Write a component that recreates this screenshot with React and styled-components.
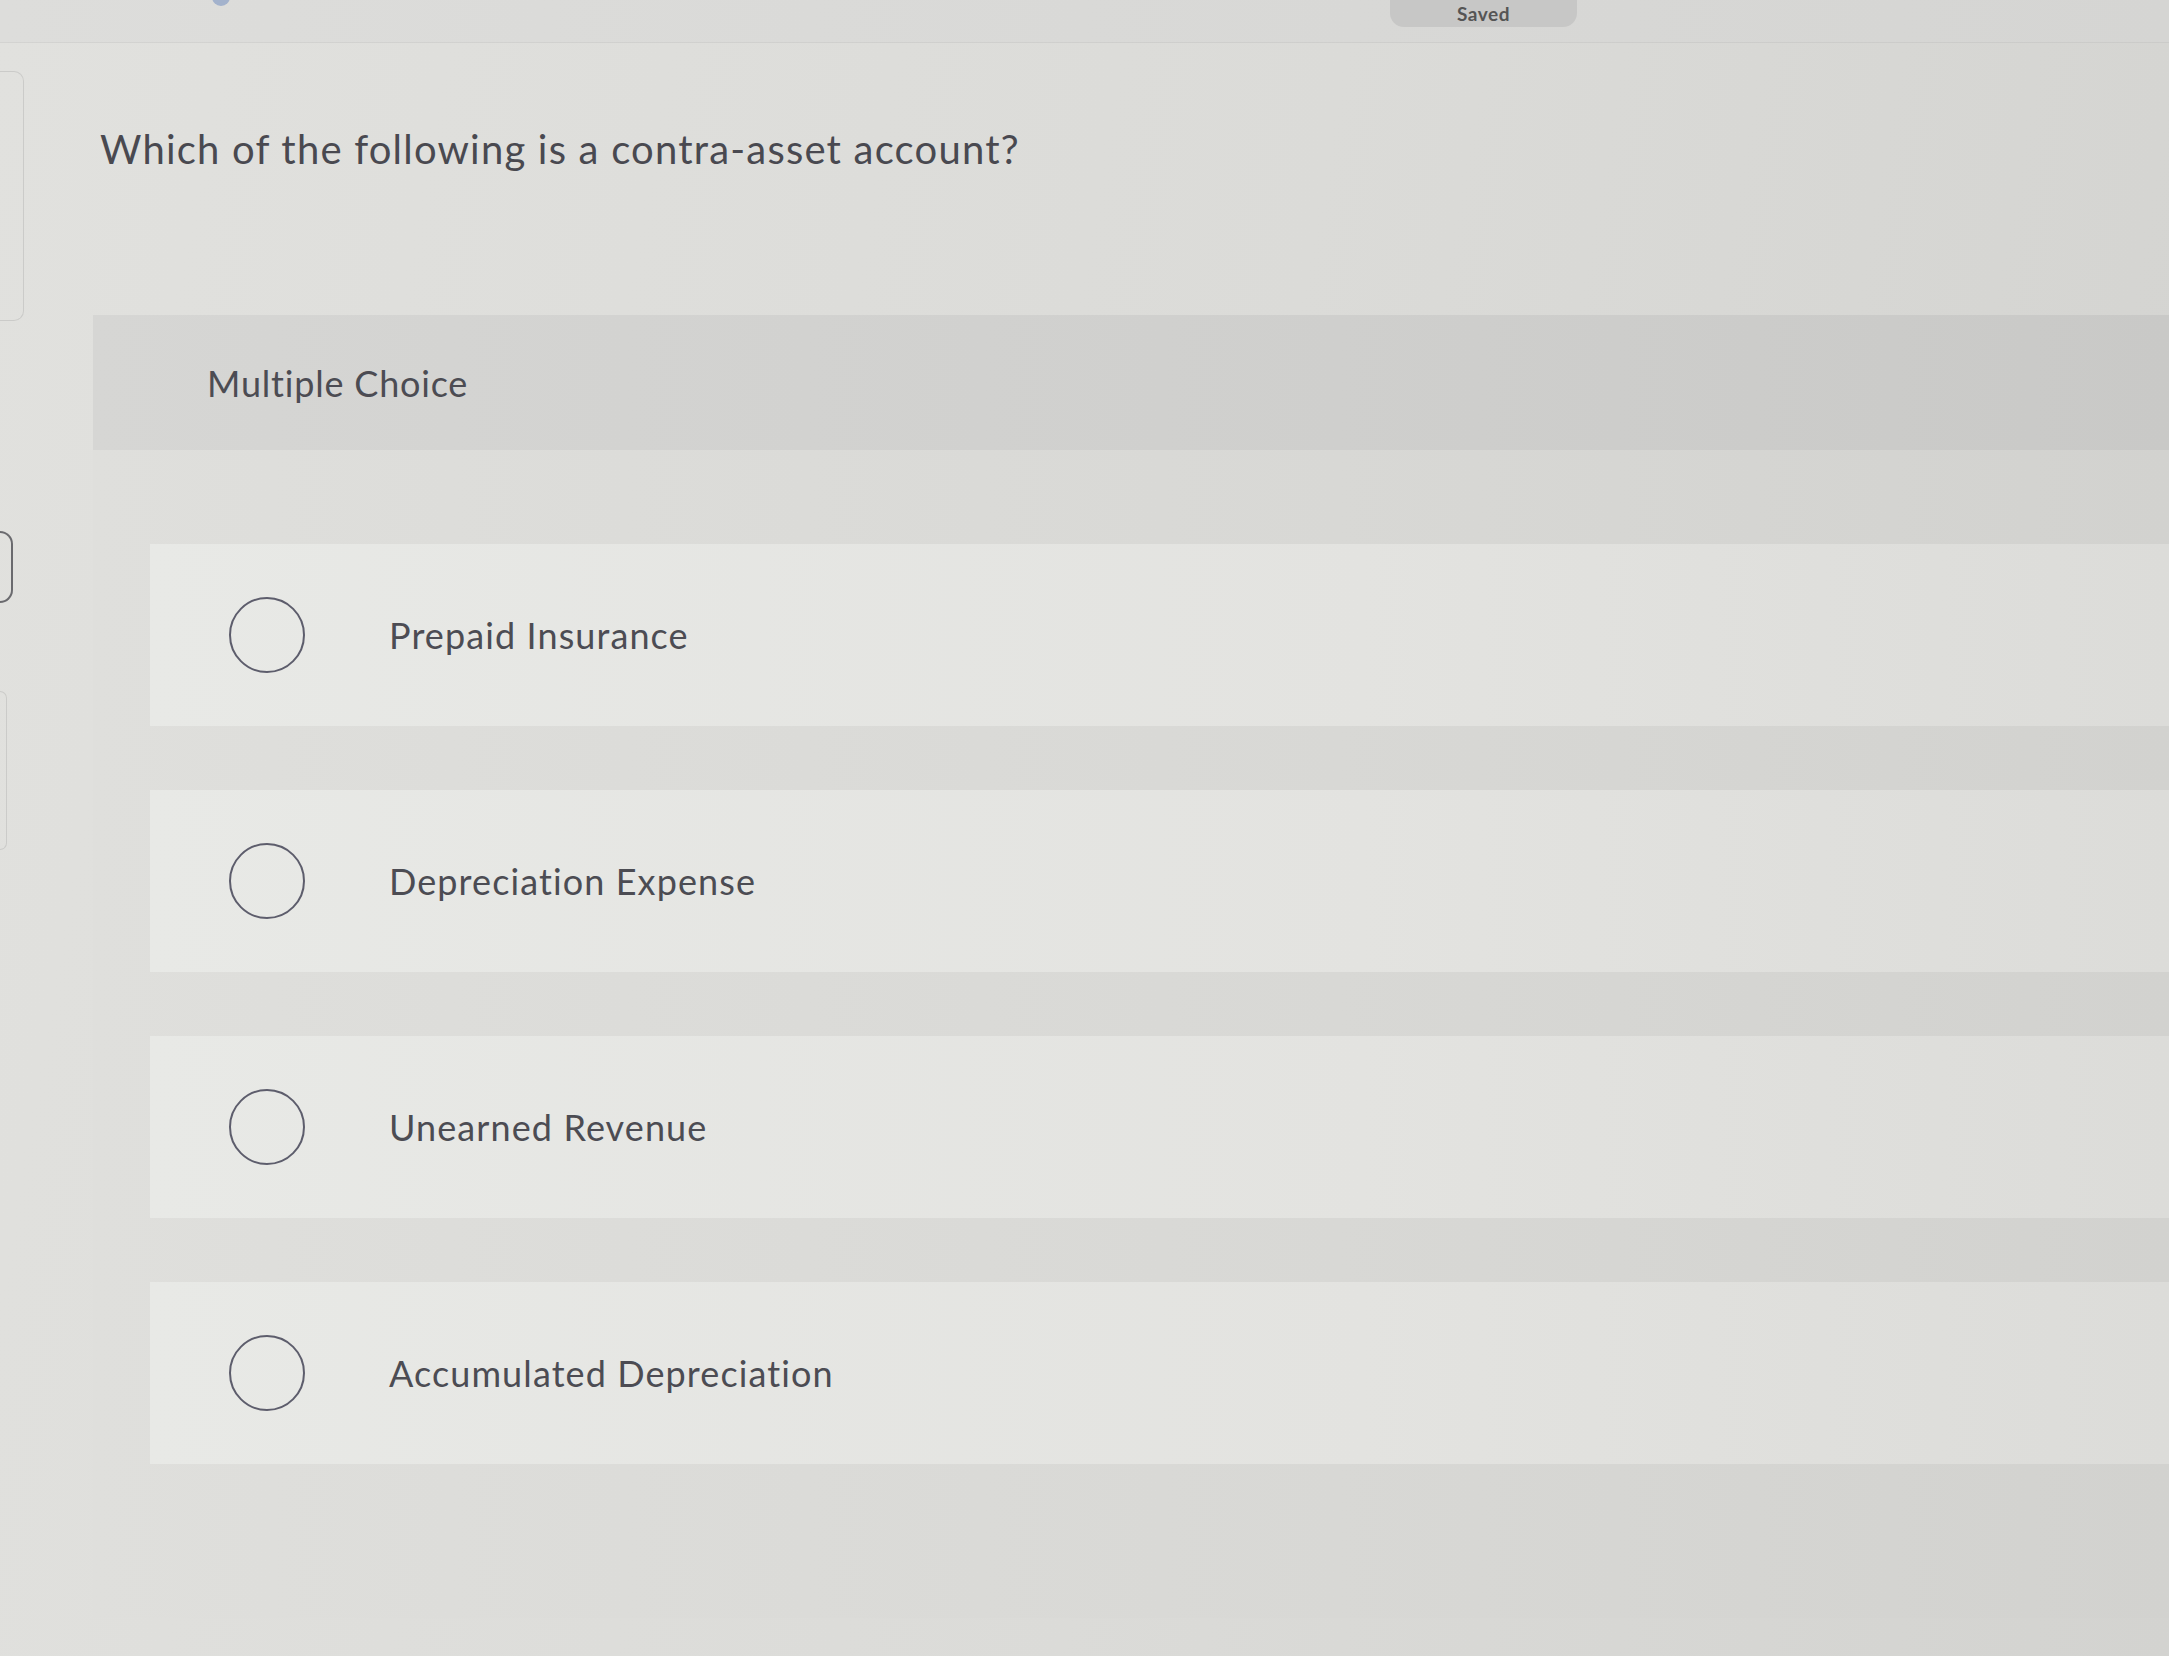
import React from "react";
import styled, { createGlobalStyle } from "styled-components";

const GlobalStyle = createGlobalStyle`
  html, body { margin: 0; padding: 0; }
  body {
    font-family: Lato, "Open Sans", "Liberation Sans", sans-serif;
    background: linear-gradient(100deg, #e1e1de 0%, #dbdbd8 55%, #d3d3d0 100%);
    overflow: hidden;
  }
`;

const Page = styled.div`
  width: 2169px;
  height: 1656px;
  display: flex;
  flex-direction: column;
  overflow: hidden;
`;

const TopBar = styled.div`
  height: 42px;
  flex: none;
  display: flex;
  align-items: flex-start;
  border-bottom: 1px solid rgba(0, 0, 0, 0.045);
  background: linear-gradient(90deg, #dddddb 0%, #d5d5d3 100%);
`;

const BlueDot = styled.div`
  width: 18px;
  height: 18px;
  margin: -12px 0 0 212px;
  border-radius: 50%;
  background: #8aa0c6;
  opacity: 0.7;
`;

const SavedPill = styled.div`
  margin-left: 1160px;
  width: 187px;
  height: 27px;
  border-radius: 0 0 14px 14px;
  background: #c7c7c6;
  display: flex;
  align-items: center;
  justify-content: center;
  color: #555;
  font-size: 19px;
  font-weight: 700;
  line-height: 1;
  letter-spacing: 0.5px;
`;

const Body = styled.div`
  flex: 1;
  display: flex;
`;

const LeftRail = styled.div`
  width: 24px;
  flex: none;
  display: flex;
  flex-direction: column;
  align-items: flex-start;
  padding-top: 28px;
`;

const SideCard = styled.div`
  width: ${(p) => p.$w}px;
  height: ${(p) => p.$h}px;
  margin-top: ${(p) => p.$mt || 0}px;
  border: 1px solid #cbcbc9;
  border-left: none;
  border-radius: 0 10px 10px 0;
`;

const Bracket = styled.div`
  width: 11px;
  height: 68px;
  margin-top: 210px;
  border: 2px solid #6a6a6e;
  border-left: none;
  border-radius: 0 24px 24px 0;
`;

const Main = styled.main`
  flex: 1;
  display: flex;
  flex-direction: column;
  padding-left: 69px;
`;

const Question = styled.h1`
  margin: 82px 0 0 7px;
  font-size: 40px;
  font-weight: 400;
  line-height: 1.2;
  letter-spacing: 1.2px;
  color: #494950;
`;

const Panel = styled.section`
  margin-top: 142px;
  display: flex;
  flex-direction: column;
  background: linear-gradient(90deg, #dfdfdc 0%, #d8d8d5 60%, #d2d2cf 100%);
`;

const PanelHeader = styled.div`
  height: 135px;
  display: flex;
  align-items: center;
  padding-left: 114px;
  background: linear-gradient(90deg, #d6d6d4 0%, #cfcfcd 60%, #c9c9c7 100%);
  font-size: 36px;
  letter-spacing: 0.8px;
  color: #4c4c53;
`;

const OptionList = styled.div`
  display: flex;
  flex-direction: column;
  gap: 64px;
  padding: 94px 0 154px 57px;
`;

const OptionRow = styled.label`
  height: 182px;
  display: flex;
  align-items: center;
  gap: 84px;
  padding-left: 79px;
  background: linear-gradient(90deg, #e8e9e6 0%, #e3e3e0 60%, #dcdcd9 100%);
  cursor: pointer;
`;

const Radio = styled.span`
  width: 72px;
  height: 72px;
  flex: none;
  border: 2.5px solid #5d5d6c;
  border-radius: 50%;
`;

const OptionText = styled.span`
  font-size: 36px;
  letter-spacing: 1.1px;
  color: #4c4c53;
`;

const options = [
  "Prepaid Insurance",
  "Depreciation Expense",
  "Unearned Revenue",
  "Accumulated Depreciation",
];

export default function App() {
  return (
    <>
      <GlobalStyle />
      <Page>
        <TopBar>
          <BlueDot />
          <SavedPill>Saved</SavedPill>
        </TopBar>
        <Body>
          <LeftRail>
            <SideCard $w={23} $h={248} />
            <Bracket />
            <SideCard $w={6} $h={157} $mt={88} />
          </LeftRail>
          <Main>
            <Question>Which of the following is a contra-asset account?</Question>
            <Panel>
              <PanelHeader>Multiple Choice</PanelHeader>
              <OptionList>
                {options.map((o) => (
                  <OptionRow key={o}>
                    <Radio />
                    <OptionText>{o}</OptionText>
                  </OptionRow>
                ))}
              </OptionList>
            </Panel>
          </Main>
        </Body>
      </Page>
    </>
  );
}
